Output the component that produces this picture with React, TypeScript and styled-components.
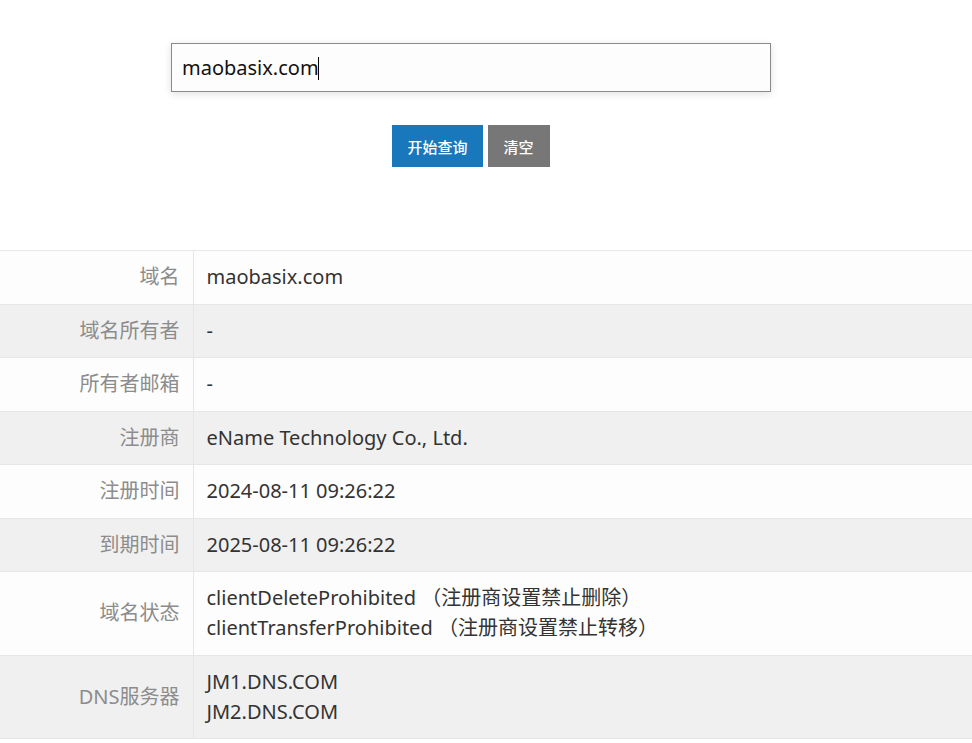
import { FC } from "react";
import styled, { createGlobalStyle } from "styled-components";

const GlobalStyle = createGlobalStyle`
    html, body {
        margin: 0;
        padding: 0;
        background: #fff;
    }
    body {
        font-family: "Noto Sans", "Noto Sans CJK SC", sans-serif;
        color: #333;
    }
`

interface IRow {
    label: string
    lines: string[]
}

const rows: IRow[] = [
    { label: "域名", lines: ["maobasix.com"] },
    { label: "域名所有者", lines: ["-"] },
    { label: "所有者邮箱", lines: ["-"] },
    { label: "注册商", lines: ["eName Technology Co., Ltd."] },
    { label: "注册时间", lines: ["2024-08-11 09:26:22"] },
    { label: "到期时间", lines: ["2025-08-11 09:26:22"] },
    {
        label: "域名状态",
        lines: [
            "clientDeleteProhibited \uFF08注册商设置禁止删除\uFF09",
            "clientTransferProhibited \uFF08注册商设置禁止转移\uFF09",
        ],
    },
    { label: "DNS服务器", lines: ["JM1.DNS.COM", "JM2.DNS.COM"] },
]

const App: FC = () => {
    return <Page>
        <GlobalStyle />
        <Search>
            <Field>
                <Input defaultValue="maobasix.com" spellCheck={false} />
                <Caret />
            </Field>
            <Actions>
                <Button kind="primary">开始查询</Button>
                <Button kind="muted">清空</Button>
            </Actions>
        </Search>
        <Table>
            <tbody>
                {rows.map((r, i) => (
                    <Row key={r.label} odd={i % 2 === 1}>
                        <Label>{r.label}</Label>
                        <Value>
                            {r.lines.map(l => <Line key={l}>{l}</Line>)}
                        </Value>
                    </Row>
                ))}
            </tbody>
        </Table>
    </Page>
}

export default App

const Page = styled.div`
    width: 972px;
    min-height: 743px;
`

const Search = styled.div`
    width: 942px;
    padding-top: 43px;
    display: flex;
    flex-direction: column;
    align-items: center;
`

const Field = styled.div`
    position: relative;
    width: 600px;
    height: 49px;
`

const Input = styled.input`
    box-sizing: border-box;
    width: 100%;
    height: 100%;
    border: 1px solid #8a8a8a;
    background: #fdfdfd;
    box-shadow: 0 2px 8px rgba(0, 0, 0, 0.12);
    padding: 0 10px;
    font-family: "Noto Sans", "Noto Sans CJK SC", sans-serif;
    font-size: 20px;
    color: #111;
    outline: none;
`

/* 光标 */
const Caret = styled.span`
    position: absolute;
    left: 147px;
    top: 14px;
    width: 1px;
    height: 23px;
    background: #000;
`

const Actions = styled.div`
    display: flex;
    gap: 5px;
    margin-top: 33px;
`

const Button = styled.button<{ kind: "primary" | "muted" }>`
    height: 42px;
    padding: 0 ${p => p.kind === "primary" ? 15 : 16}px;
    border: none;
    background: ${p => p.kind === "primary" ? "#1878bb" : "#777777"};
    color: #fff;
    font-family: "Noto Sans CJK SC", sans-serif;
    font-size: 15px;
    font-weight: 500;
    cursor: pointer;
`

const Table = styled.table`
    width: 972px;
    margin-top: 83px;
    border-collapse: collapse;
    border-top: 1px solid #e8e8e8;
`

const Row = styled.tr<{ odd: boolean }>`
    background: ${p => p.odd ? "#f0f0f0" : "#fdfdfd"};
    border-bottom: 1px solid #e6e6e6;
`

const Label = styled.td`
    width: 193px;
    box-sizing: border-box;
    padding: 11.25px 13px;
    border-right: 1px solid #e6e6e6;
    text-align: right;
    vertical-align: middle;
    color: #8c8c8c;
    font-size: 20px;
    line-height: 30px;
`

const Value = styled.td`
    padding: 11.25px 13px;
    vertical-align: middle;
    color: #333;
    font-size: 20px;
    line-height: 30px;
`

const Line = styled.div`
    white-space: pre;
`
